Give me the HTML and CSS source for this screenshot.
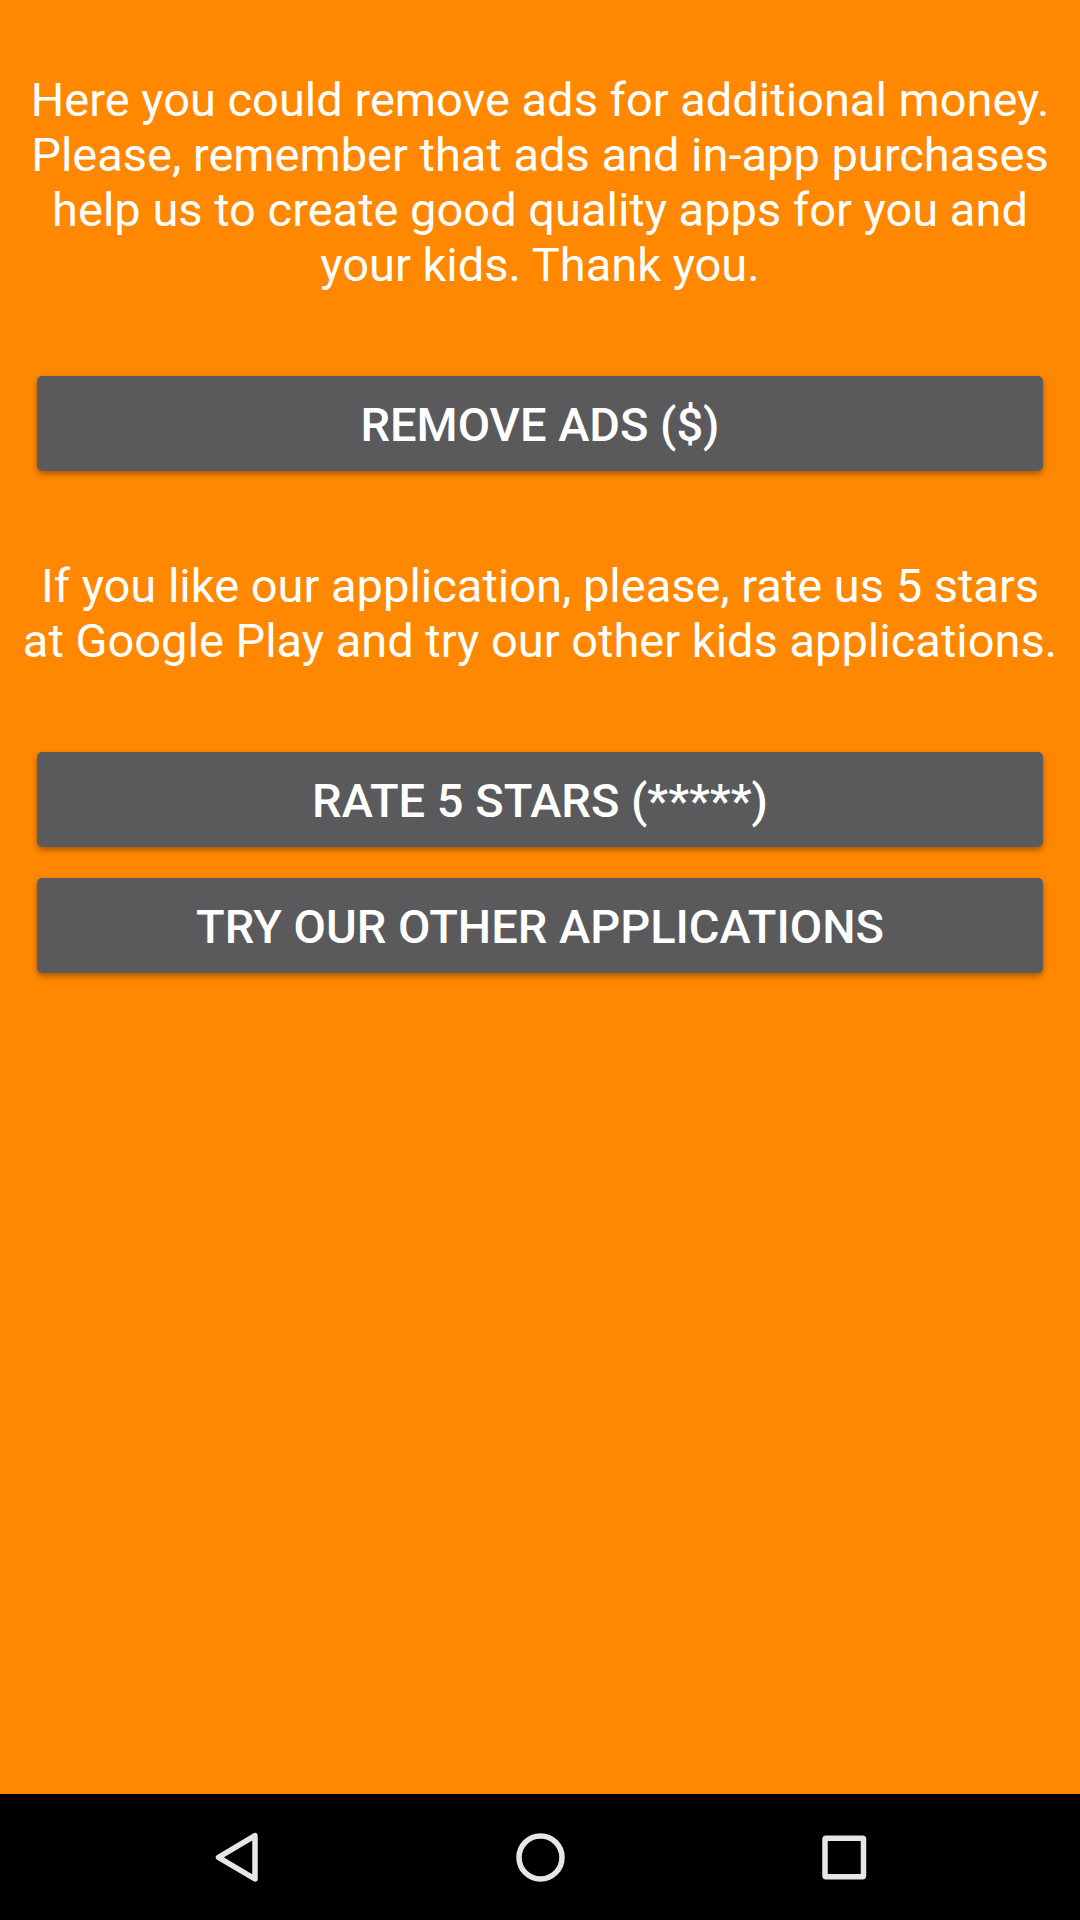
FILE: index.html
```html
<!DOCTYPE html>
<html lang="en">
<head>
<meta charset="utf-8">
<meta name="viewport" content="width=device-width, initial-scale=1">
<title>Remove ads</title>
<link rel="stylesheet" href="styles.css">
</head>
<body>
<main class="content">
  <p class="message">Here you could remove ads for additional money. Please, remember that ads and in-app purchases help us to create good quality apps for you and your kids. Thank you.</p>
  <button class="action" type="button">REMOVE ADS ($)</button>
  <p class="message">If you like our application, please, rate us 5 stars at Google Play and try our other kids applications.</p>
  <button class="action" type="button">RATE 5 STARS (*****)</button>
  <button class="action" type="button">TRY OUR OTHER APPLICATIONS</button>
</main>
<nav class="navbar" aria-label="System navigation">
  <button class="nav-button" type="button" aria-label="Back">
    <svg viewBox="0 0 60 60"><path d="M49 8.700V52L12.500 30.300Z"/></svg>
  </button>
  <button class="nav-button" type="button" aria-label="Home">
    <svg viewBox="0 0 60 60"><circle cx="30.500" cy="30.400" r="21.500"/></svg>
  </button>
  <button class="nav-button" type="button" aria-label="Recent apps">
    <svg viewBox="0 0 60 60"><rect x="11" y="11.300" width="38.500" height="38.500" rx="1"/></svg>
  </button>
</nav>
</body>
</html>
```
FILE: styles.css
```css
* {
  box-sizing: border-box;
}

body {
  display: flex;
  flex-direction: column;
  min-height: 100vh;
  margin: 0;
  background: #ff8800;
  color: #fff;
  font-family: Roboto, sans-serif;
  font-size: 47px;
}

.content {
  display: flex;
  flex: 1;
  flex-direction: column;
  padding: 0 16px;
}

.message {
  margin: 0;
  padding: 72px 0 68px;
  line-height: 55px;
  text-align: center;
}

.action {
  margin: 16px 21px 15px;
  padding: 21px 0 19px;
  border: 0;
  border-radius: 5px;
  background: #5a595b;
  box-shadow: 0 3px 6px rgba(0, 0, 0, 0.35);
  color: inherit;
  font: 500 47px/55px Roboto, sans-serif;
}

.navbar {
  display: flex;
  height: 126px;
  padding: 0 84px;
  background: #000;
}

.nav-button {
  display: flex;
  flex: 1;
  align-items: center;
  justify-content: center;
  padding: 0;
  border: 0;
  background: none;
}

.nav-button svg {
  width: 60px;
  height: 60px;
  fill: none;
  stroke: #e6e6e6;
  stroke-width: 5.5;
  stroke-linejoin: round;
}
```
